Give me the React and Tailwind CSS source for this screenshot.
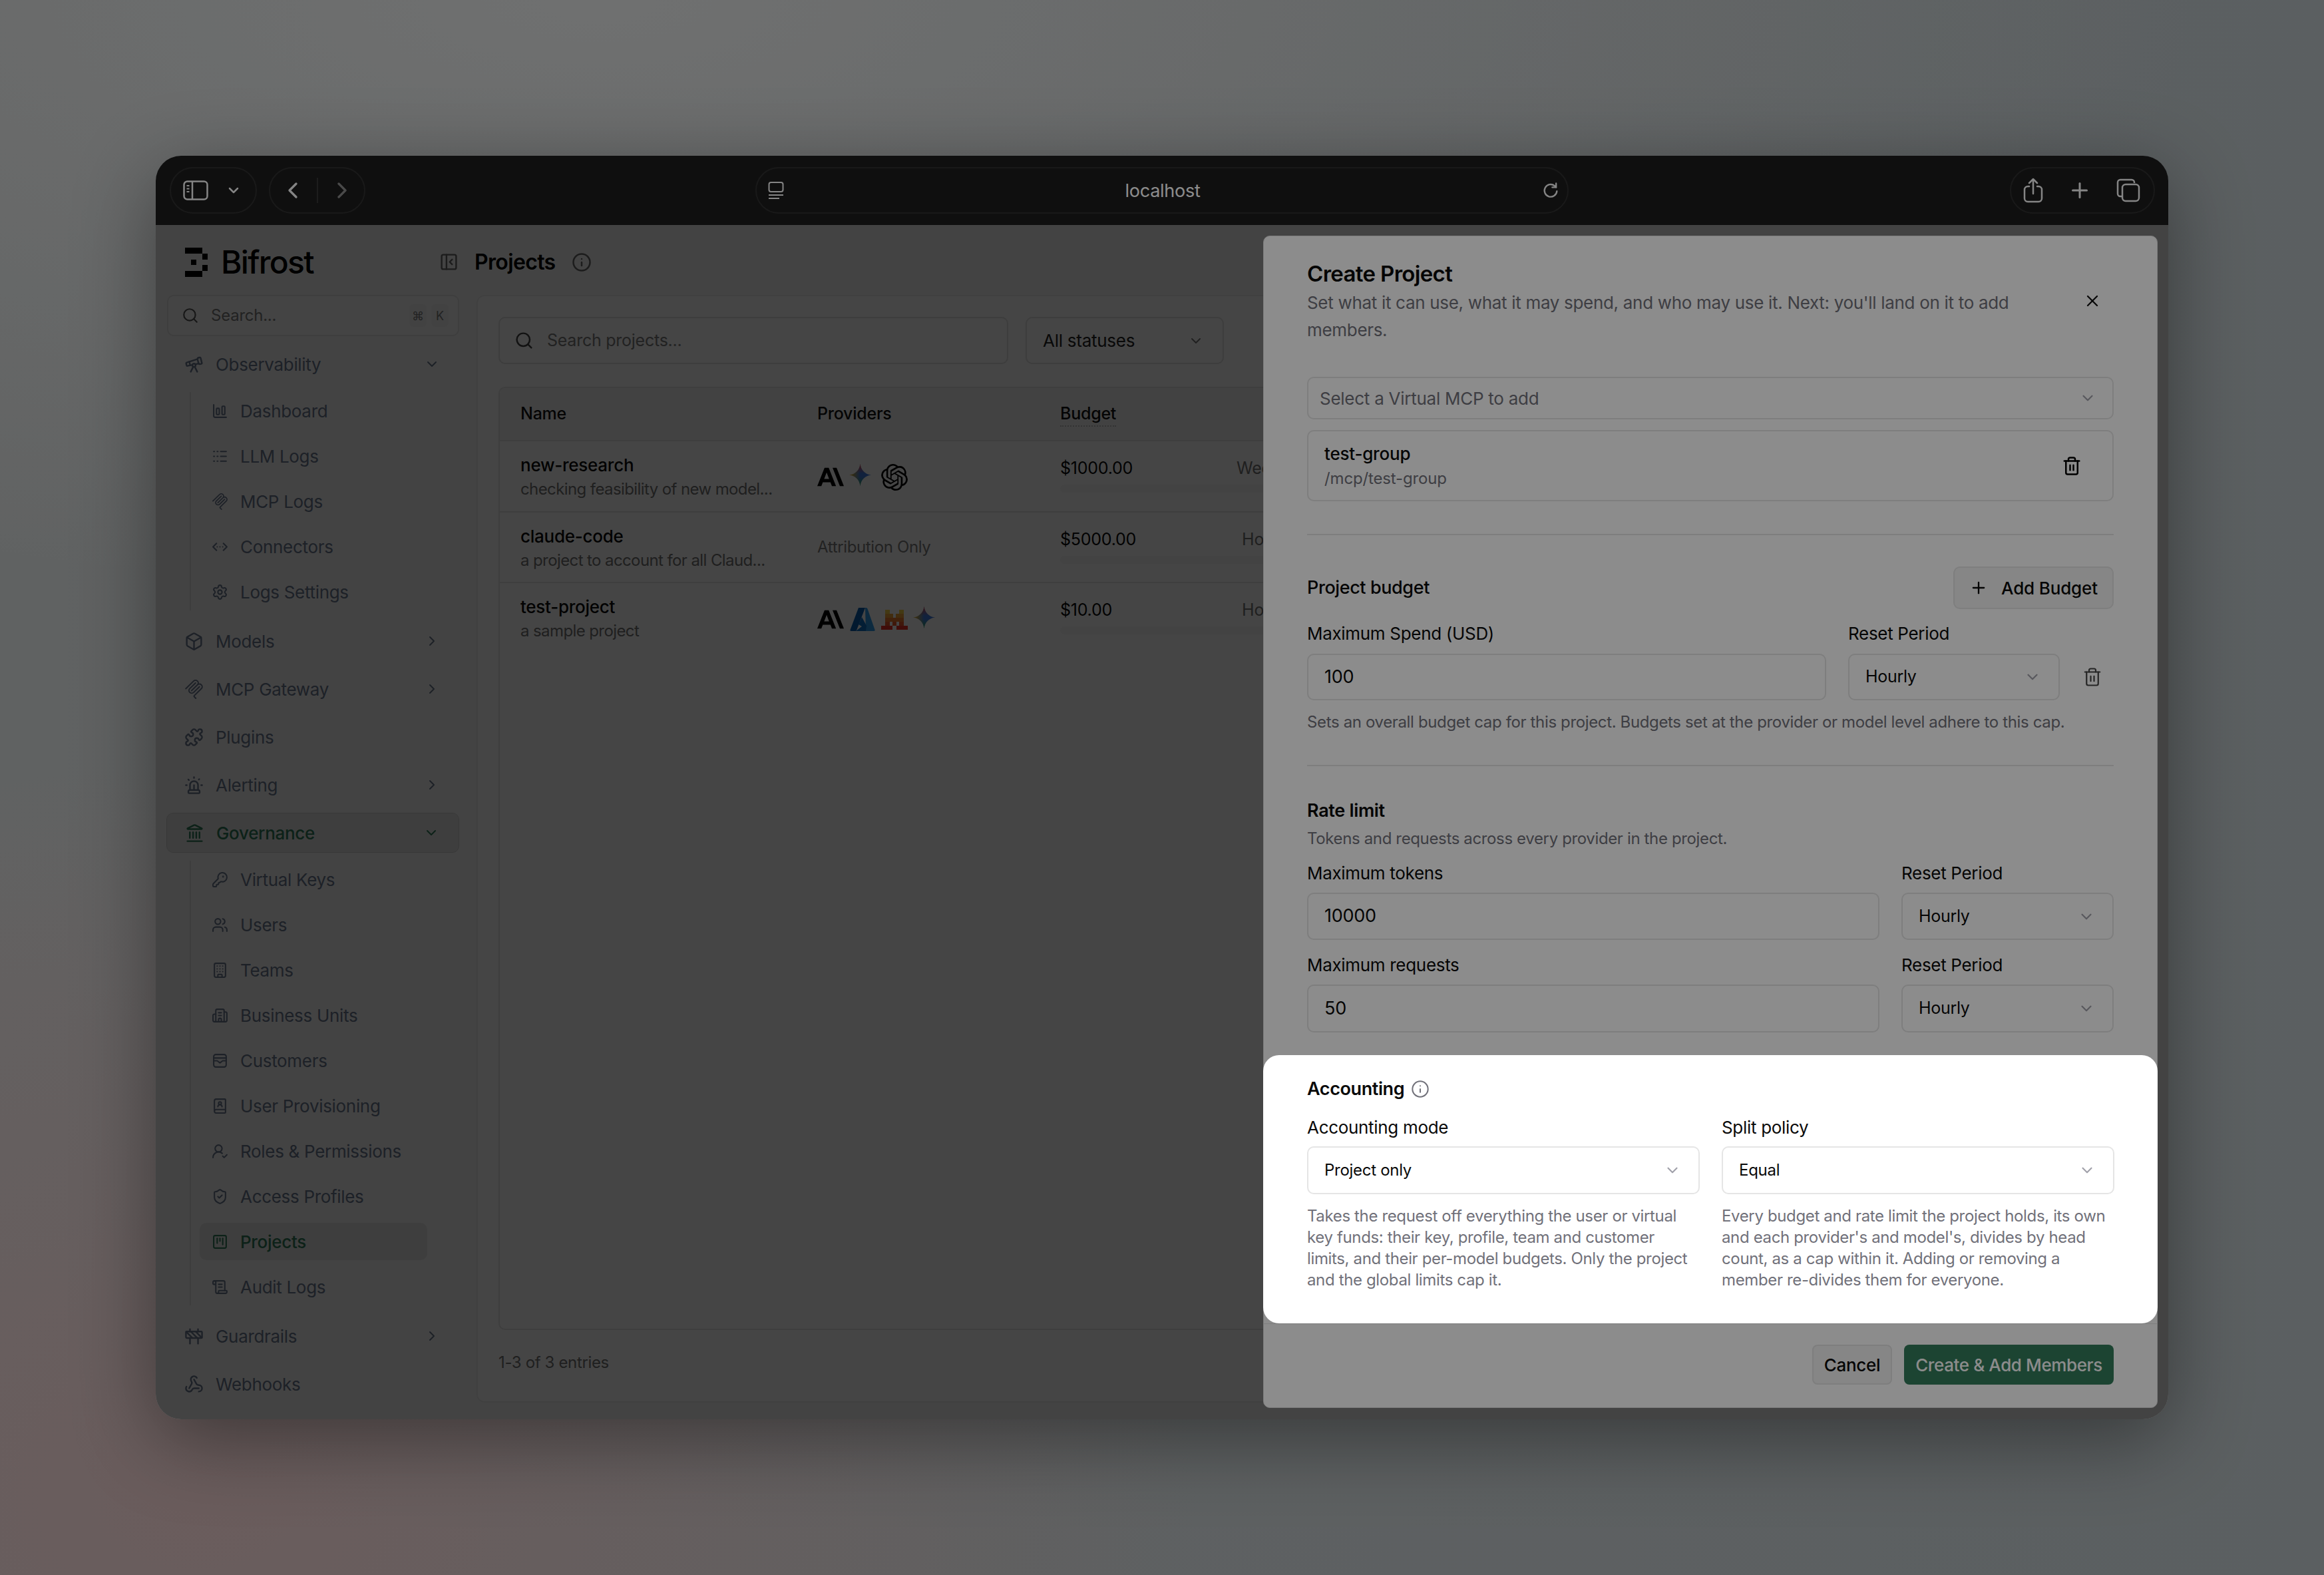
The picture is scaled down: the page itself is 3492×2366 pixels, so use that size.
import React from "react";
import {
  Telescope, ChartColumnBig, Logs, ChevronsLeftRightEllipsis, Settings, Box, Puzzle, Siren, Landmark,
  KeyRound, Users, Building, Building2, BookUser, UserRoundCheck, ShieldCheck, SquareKanban, ScrollText,
  Construction, Webhook, ChevronDown, ChevronRight, ChevronLeft, Search, Info, PanelLeftClose, X, Plus, Trash2,
} from "lucide-react";

const McpIcon = ({ className }) => (
  <svg viewBox="0 0 24 24" fill="currentColor" className={className}>
    <path d="M15.688 2.343a2.588 2.588 0 00-3.61 0l-9.626 9.44a.863.863 0 01-1.203 0 .823.823 0 010-1.18l9.626-9.44a4.313 4.313 0 016.016 0 4.116 4.116 0 011.204 3.54 4.3 4.3 0 013.609 1.18l.05.05a4.115 4.115 0 010 5.9l-8.706 8.537a.274.274 0 000 .393l1.788 1.754a.823.823 0 010 1.18.863.863 0 01-1.203 0l-1.788-1.753a1.92 1.92 0 010-2.754l8.706-8.538a2.47 2.47 0 000-3.54l-.05-.049a2.588 2.588 0 00-3.607-.003l-7.172 7.034-.002.002-.098.097a.863.863 0 01-1.204 0 .823.823 0 010-1.18l7.273-7.133a2.47 2.47 0 00-.003-3.537z" />
    <path d="M14.485 4.703a.823.823 0 000-1.18.863.863 0 00-1.204 0l-7.119 6.982a4.115 4.115 0 000 5.9 4.314 4.314 0 006.016 0l7.12-6.982a.823.823 0 000-1.18.863.863 0 00-1.204 0l-7.119 6.982a2.588 2.588 0 01-3.61 0 2.47 2.47 0 010-3.54l7.12-6.982z" />
  </svg>
);

const CustomersIcon = ({ className }) => (
  <svg viewBox="0 0 24 24" fill="none" stroke="currentColor" strokeWidth="2" strokeLinecap="round" strokeLinejoin="round" className={className}>
    <rect x="3" y="3" width="18" height="18" rx="3" />
    <path d="M3 8h18" />
    <path d="M3 12h5l4 3 4-3h5" />
  </svg>
);

const BifrostLogo = () => (
  <svg viewBox="0 0 34 44" className="w-[34px] h-[44px]" fill="#000">
    <rect x="0" y="0" width="26" height="9" />
    <rect x="26" y="9" width="8" height="9" />
    <rect x="9" y="18" width="8" height="8" />
    <rect x="26" y="26" width="8" height="9" />
    <rect x="0" y="35" width="26" height="9" />
  </svg>
);

const Anthropic = () => (
  <svg viewBox="0 0 24 24" className="w-[40px] h-[40px]" fill="#000">
    <path d="M13.827 3.52h3.603L24 20h-3.603l-6.57-16.48zm-7.258 0h3.767L16.906 20h-3.674l-1.343-3.461H5.017l-1.344 3.46H0L6.57 3.522zm4.132 9.959L8.453 7.687 6.205 13.48H10.7z" />
  </svg>
);

const Gemini = () => (
  <svg viewBox="0 0 29 29" className="w-[40px] h-[40px]">
    <defs>
      <linearGradient id="gemH" x1="0" y1="0" x2="1" y2="0">
        <stop offset="0" stopColor="#f5b400" />
        <stop offset="0.5" stopColor="#3f7be0" />
        <stop offset="1" stopColor="#3f7be0" />
      </linearGradient>
      <linearGradient id="gemV" x1="0" y1="0" x2="0" y2="1">
        <stop offset="0" stopColor="#e8453c" />
        <stop offset="0.42" stopColor="#e8453c" stopOpacity="0" />
        <stop offset="0.58" stopColor="#34a853" stopOpacity="0" />
        <stop offset="1" stopColor="#34a853" />
      </linearGradient>
    </defs>
    <path d="M12 0C12.6 6.5 17.5 11.4 24 12C17.5 12.6 12.6 17.5 12 24C11.4 17.5 6.5 12.6 0 12C6.5 11.4 11.4 6.5 12 0Z" fill="url(#gemH)" />
    <path d="M12 0C12.6 6.5 17.5 11.4 24 12C17.5 12.6 12.6 17.5 12 24C11.4 17.5 6.5 12.6 0 12C6.5 11.4 11.4 6.5 12 0Z" fill="url(#gemV)" />
  </svg>
);

const OpenAI = () => (
  <svg viewBox="0 0 24 24" className="w-[40px] h-[40px]" fill="#000">
    <path d="M22.2819 9.8211a5.9847 5.9847 0 0 0-.5157-4.9108 6.0462 6.0462 0 0 0-6.5098-2.9A6.0651 6.0651 0 0 0 4.9807 4.1818a5.9847 5.9847 0 0 0-3.9977 2.9 6.0462 6.0462 0 0 0 .7427 7.0966 5.98 5.98 0 0 0 .511 4.9107 6.051 6.051 0 0 0 6.5146 2.9001A5.9847 5.9847 0 0 0 13.2599 24a6.0557 6.0557 0 0 0 5.7718-4.2058 5.9894 5.9894 0 0 0 3.9977-2.9001 6.0557 6.0557 0 0 0-.7475-7.0729zm-9.022 12.6081a4.4755 4.4755 0 0 1-2.8764-1.0408l.1419-.0804 4.7783-2.7582a.7948.7948 0 0 0 .3927-.6813v-6.7369l2.02 1.1686a.071.071 0 0 1 .038.052v5.5826a4.504 4.504 0 0 1-4.4945 4.4944zm-9.6607-4.1254a4.4708 4.4708 0 0 1-.5346-3.0137l.142.0852 4.783 2.7582a.7712.7712 0 0 0 .7806 0l5.8428-3.3685v2.3324a.0804.0804 0 0 1-.0332.0615L9.74 19.9502a4.4992 4.4992 0 0 1-6.1408-1.6464zM2.3408 7.8956a4.485 4.485 0 0 1 2.3655-1.9728V11.6a.7664.7664 0 0 0 .3879.6765l5.8144 3.3543-2.0201 1.1685a.0757.0757 0 0 1-.071 0l-4.8303-2.7865A4.504 4.504 0 0 1 2.3408 7.872zm16.5963 3.8558L13.1038 8.364 15.1192 7.2a.0757.0757 0 0 1 .071 0l4.8303 2.7913a4.4944 4.4944 0 0 1-.6765 8.1042v-5.6772a.79.79 0 0 0-.407-.667zm2.0107-3.0231l-.142-.0852-4.7735-2.7818a.7759.7759 0 0 0-.7854 0L9.409 9.2297V6.8974a.0662.0662 0 0 1 .0284-.0615l4.8303-2.7866a4.4992 4.4992 0 0 1 6.6802 4.66zM8.3065 12.863l-2.02-1.1638a.0804.0804 0 0 1-.038-.0567V6.0742a4.4992 4.4992 0 0 1 7.3757-3.4537l-.142.0805L8.704 5.459a.7948.7948 0 0 0-.3927.6813zm1.0976-2.3654l2.602-1.4998 2.6069 1.4998v2.9994l-2.5974 1.4997-2.6067-1.4997Z" />
  </svg>
);

const Azure = () => (
  <svg viewBox="0 0 40 40" className="w-[40px] h-[40px]">
    <path d="M14 2h10L11 36a2 2 0 0 1-2 1H3a1.5 1.5 0 0 1-1.4-2z" fill="#0a5cad" />
    <path d="M24 2h1.5a2 2 0 0 1 2 1.5L38.5 35a1.5 1.5 0 0 1-1.4 2H25z" fill="#2f9be8" />
    <path d="M19 16l7 13-1 8H10l9-7-5-3z" fill="#0c6fc4" />
  </svg>
);

const Mistral = () => (
  <svg viewBox="0 0 40 40" className="w-[40px] h-[40px]">
    <rect x="6" y="5" width="7" height="6" fill="#f7d046" />
    <rect x="27" y="5" width="7" height="6" fill="#f7d046" />
    <rect x="6" y="11" width="12" height="6" fill="#f2a73b" />
    <rect x="22" y="11" width="12" height="6" fill="#f2a73b" />
    <rect x="6" y="17" width="28" height="6" fill="#ee792f" />
    <rect x="6" y="23" width="7" height="6" fill="#eb5829" />
    <rect x="17" y="23" width="6" height="6" fill="#eb5829" />
    <rect x="27" y="23" width="7" height="6" fill="#eb5829" />
    <rect x="0" y="29" width="17" height="6" fill="#ea3326" />
    <rect x="23" y="29" width="17" height="6" fill="#ea3326" />
  </svg>
);

const Provider = ({ children }) => (
  <div className="w-[40px] h-[40px] rounded-[8px] bg-[#fcfcfc]">{children}</div>
);

const nested1 = [
  { label: "Dashboard", Icon: ChartColumnBig },
  { label: "LLM Logs", Icon: Logs },
  { label: "MCP Logs", Icon: McpIcon },
  { label: "Connectors", Icon: ChevronsLeftRightEllipsis },
  { label: "Logs Settings", Icon: Settings },
];

const nested2 = [
  { label: "Virtual Keys", Icon: KeyRound },
  { label: "Users", Icon: Users },
  { label: "Teams", Icon: Building },
  { label: "Business Units", Icon: Building2 },
  { label: "Customers", Icon: CustomersIcon },
  { label: "User Provisioning", Icon: BookUser },
  { label: "Roles & Permissions", Icon: UserRoundCheck },
  { label: "Access Profiles", Icon: ShieldCheck },
  { label: "Projects", Icon: SquareKanban, active: true },
  { label: "Audit Logs", Icon: ScrollText },
];

const NavRow = ({ label, Icon, chevron, active }) => (
  <div
    className={`h-[60px] flex items-center pl-[27px] pr-[29px] rounded-[10px] text-[26px] tracking-[-0.012em] ${
      active ? "bg-[#e4e4e4] border border-[#cfcfcf] text-[#2f7a58] font-medium" : "text-[#6b7890]"
    }`}
  >
    <Icon className="w-[29px] h-[29px] shrink-0" strokeWidth={2} />
    <span className="ml-[18px] flex-1">{label}</span>
    {chevron === "down" && <ChevronDown className="w-[24px] h-[24px]" strokeWidth={2} />}
    {chevron === "right" && <ChevronRight className="w-[24px] h-[24px]" strokeWidth={2} />}
  </div>
);

const NestedList = ({ items }) => (
  <div className="ml-[35px] pl-[14px] border-l-2 border-[#dedede] flex flex-col gap-[12px] mb-[4px]">
    {items.map(({ label, Icon, active }) => (
      <div
        key={label}
        className={`w-[342px] h-[56px] flex items-center px-[18px] -ml-px rounded-[10px] text-[26px] tracking-[-0.012em] ${
          active ? "bg-[#e4e4e4] text-[#2f7a58] font-medium" : "text-[#6b7890]"
        }`}
      >
        <Icon className="w-[25px] h-[25px] shrink-0" strokeWidth={2} />
        <span className="ml-[18px]">{label}</span>
      </div>
    ))}
  </div>
);

const Sidebar = () => (
  <div className="w-[482px] shrink-0 pl-[16px] pr-[26px] flex flex-col">
    <div className="h-[105px] flex items-center pl-[28px] gap-[20px] pt-[6px]">
      <BifrostLogo />
      <span className="text-[48px] font-medium tracking-[-0.035em] text-black leading-none">Bifrost</span>
    </div>
    <div className="h-[62px] ml-[1px] rounded-[10px] border-2 border-[#e2e2e2] bg-[#fbfbfb] flex items-center pl-[20px] pr-[14px] text-[24px] text-[#7d7d7d]">
      <Search className="w-[26px] h-[26px] text-[#555]" strokeWidth={2} />
      <span className="ml-[18px] flex-1 tracking-[-0.01em]">Search...</span>
      <span className="w-[26px] h-[34px] rounded-[6px] bg-[#f1f1f1] flex items-center justify-center text-[18px] mr-[7px]">⌘</span>
      <span className="w-[26px] h-[34px] rounded-[6px] bg-[#f1f1f1] flex items-center justify-center text-[18px]">K</span>
    </div>
    <div className="mt-[12px] flex flex-col gap-[12px]">
      <NavRow label="Observability" Icon={Telescope} chevron="down" />
      <NestedList items={nested1} />
      <NavRow label="Models" Icon={Box} chevron="right" />
      <NavRow label="MCP Gateway" Icon={McpIcon} chevron="right" />
      <NavRow label="Plugins" Icon={Puzzle} />
      <NavRow label="Alerting" Icon={Siren} chevron="right" />
      <NavRow label="Governance" Icon={Landmark} chevron="down" active />
      <NestedList items={nested2} />
      <NavRow label="Guardrails" Icon={Construction} chevron="right" />
      <NavRow label="Webhooks" Icon={Webhook} />
    </div>
  </div>
);

const rows = [
  { name: "new-research", desc: "checking feasibility of new model...", providers: [Anthropic, Gemini, OpenAI], budget: "$1000.00", period: "Weekly" },
  { name: "claude-code", desc: "a project to account for all Claud...", budget: "$5000.00", period: "Hourly" },
  { name: "test-project", desc: "a sample project", providers: [Anthropic, Azure, Mistral, Gemini], budget: "$10.00", period: "Hourly", last: true },
];

const MainPanel = () => (
  <div className="flex-1 flex flex-col pr-[16px]">
    <div className="h-[105px] flex items-center -ml-[56px] pt-[6px]">
      <PanelLeftClose className="w-[29px] h-[29px] text-[#666]" strokeWidth={2} />
      <span className="ml-[24px] text-[32px] font-semibold tracking-[-0.02em] text-black">Projects</span>
      <Info className="ml-[24px] w-[30px] h-[30px] text-[#666]" strokeWidth={2} />
    </div>
    <div className="flex-1 mb-[25px] rounded-[12px] border-2 border-[#ededed] bg-[#fdfdfd] px-[31px] pt-[31px] flex flex-col">
      <div className="flex gap-[26px]">
        <div className="w-[766px] h-[71px] rounded-[10px] border-2 border-[#dedede] flex items-center pl-[22px] text-[25px] text-[#7d7d7d] tracking-[-0.01em]">
          <Search className="w-[29px] h-[29px] text-[#444]" strokeWidth={2} />
          <span className="ml-[20px]">Search projects...</span>
        </div>
        <div className="w-[298px] h-[71px] rounded-[10px] border-2 border-[#dedede] flex items-center pl-[24px] pr-[28px] justify-between text-[26px] text-[#222] tracking-[-0.01em]">
          <span>All statuses</span>
          <ChevronDown className="w-[24px] h-[24px] text-[#777]" strokeWidth={2} />
        </div>
      </div>
      <div className="mt-[34px] flex-1 rounded-[10px] border-2 border-[#e5e5e5] overflow-hidden">
        <div className="h-[80px] bg-[#f3f3f3] border-b-2 border-[#e5e5e5] flex items-center pl-[31px] text-[25px] font-medium text-[#111] tracking-[-0.01em]">
          <span className="w-[446px]">Name</span>
          <span className="w-[365px]">Providers</span>
          <span className="border-b-2 border-dotted border-[#bbb] leading-[36px]">Budget</span>
        </div>
        {rows.map((r) => (
          <div key={r.name} className={`h-[106.5px] flex pl-[31px] ${r.last ? "" : "border-b-2 border-[#e5e5e5]"}`}>
            <div className="w-[446px] pt-[19px]">
              <div className="text-[26px] leading-[34px] font-medium text-[#0a0a0a] tracking-[-0.01em]">{r.name}</div>
              <div className="text-[24px] leading-[34px] mt-[2px] text-[#757575] tracking-[-0.025em]">{r.desc}</div>
            </div>
            <div className="w-[365px] flex items-center">
              {r.providers ? (
                <div className="flex gap-[8px] mt-[4px]">
                  {r.providers.map((P, i) => (
                    <Provider key={i}>
                      <P />
                    </Provider>
                  ))}
                </div>
              ) : (
                <span className="text-[24px] text-[#7d7d7d] tracking-[-0.015em]">Attribution Only</span>
              )}
            </div>
            <div className="w-[360px] pt-[23px]">
              <div className="flex justify-between text-[25px] leading-[34px] tracking-[-0.01em]">
                <span className="text-[#0a0a0a]">{r.budget}</span>
                <span className="text-[#757575] mr-[10px]">{r.period}</span>
              </div>
              <div className="mt-[8px] h-[12px] rounded-full bg-[#f7f7f7]"></div>
            </div>
          </div>
        ))}
      </div>
      <div className="h-[107px] pt-[33px] text-[24px] leading-[32px] text-[#757575] tracking-[-0.015em]">1-3 of 3 entries</div>
    </div>
  </div>
);

const Label = ({ children }) => (
  <div className="text-[26px] leading-[32px] text-[#0a0a0a] tracking-[-0.012em]">{children}</div>
);

const Field = ({ value, className }) => (
  <div className={`rounded-[10px] border-2 border-[#e5e5e5] flex items-center pl-[24px] text-[27px] text-[#0a0a0a] tracking-[-0.01em] ${className}`}>
    {value}
  </div>
);

const SelectBox = ({ value, className, text = "text-[25px]" }) => (
  <div className={`rounded-[10px] border-2 border-[#e5e5e5] flex items-center justify-between pl-[24px] pr-[26px] ${text} text-[#0a0a0a] tracking-[-0.012em] ${className}`}>
    <span>{value}</span>
    <ChevronDown className="w-[26px] h-[26px] text-[#a1a1aa]" strokeWidth={2} />
  </div>
);

const CreateProjectDialog = () => (
  <div className="absolute z-50 top-[16px] right-[16px] bottom-[17px] w-[1344px] bg-white rounded-[10px] border border-[#e5e5e5] flex flex-col">
    <div className="px-[65px] pt-[36px]">
      <div className="flex items-center">
        <div className="w-[1120px] flex-1">
          <div className="text-[33px] leading-[40px] font-semibold text-[#0a0a0a] tracking-[-0.02em]">Create Project</div>
          <div className="mt-[3px] w-[1100px] text-[26px] leading-[41px] text-[#71717a] tracking-[-0.012em]">
            Set what it can use, what it may spend, and who may use it. Next: you'll land on it to add members.
          </div>
        </div>
        <X className="w-[28px] h-[28px] mr-[18px] mb-[3px] text-[#111]" strokeWidth={2} />
      </div>

      <div className="mt-[50px] h-[64px] rounded-[10px] border-2 border-[#e5e5e5] flex items-center justify-between pl-[17px] pr-[24px] text-[26px] text-[#71717a] tracking-[-0.01em]">
        <span>Select a Virtual MCP to add</span>
        <ChevronDown className="w-[26px] h-[26px] text-[#a1a1aa]" strokeWidth={2} />
      </div>
      <div className="mt-[16px] h-[107px] rounded-[10px] border-2 border-[#e5e5e5] flex items-center justify-between pl-[24px] pr-[46px]">
        <div>
          <div className="text-[26px] leading-[36px] font-medium text-[#0a0a0a] tracking-[-0.008em]">test-group</div>
          <div className="text-[24px] leading-[32px] mt-[3px] text-[#71717a] tracking-[-0.006em]">/mcp/test-group</div>
        </div>
        <Trash2 className="w-[30px] h-[30px] text-black" strokeWidth={2} />
      </div>

      <div className="mt-[49px] h-[2px] bg-[#e5e5e5]"></div>

      <div className="mt-[47px] flex items-center justify-between">
        <span className="text-[27px] font-medium text-[#0a0a0a] tracking-[-0.015em]">Project budget</span>
        <div className="w-[241px] h-[64px] rounded-[10px] border-2 border-[#e5e5e5] bg-[#f5f5f5] flex items-center justify-center gap-[20px] text-[26px] font-medium text-[#0a0a0a] tracking-[-0.006em]">
          <Plus className="w-[28px] h-[28px]" strokeWidth={2} />
          <span>Add Budget</span>
        </div>
      </div>
      <div className="mt-[21px] flex">
        <div className="w-[780px]">
          <Label>Maximum Spend (USD)</Label>
          <Field value="100" className="mt-[14px] h-[70px]" />
        </div>
        <div className="ml-[33px] w-[318px]">
          <Label>Reset Period</Label>
          <SelectBox value="Hourly" className="mt-[14px] h-[70px]" />
        </div>
        <div className="ml-[34px] self-end h-[70px] flex items-center">
          <Trash2 className="w-[30px] h-[30px] text-[#444]" strokeWidth={1.75} />
        </div>
      </div>
      <div className="mt-[17px] text-[24px] leading-[32px] text-[#71717a] tracking-[-0.015em]">
        Sets an overall budget cap for this project. Budgets set at the provider or model level adhere to this cap.
      </div>

      <div className="mt-[48px] h-[2px] bg-[#e5e5e5]"></div>

      <div className="mt-[49px] text-[27px] leading-[36px] font-semibold text-[#0a0a0a] tracking-[-0.012em]">Rate limit</div>
      <div className="mt-[8px] text-[24px] leading-[32px] text-[#71717a] tracking-[-0.015em]">
        Tokens and requests across every provider in the project.
      </div>
      <div className="mt-[20px] flex gap-[33px]">
        <div className="w-[860px]">
          <Label>Maximum tokens</Label>
          <Field value="10000" className="mt-[13px] h-[71px]" />
        </div>
        <div className="flex-1">
          <Label>Reset Period</Label>
          <SelectBox value="Hourly" className="mt-[13px] h-[71px]" />
        </div>
      </div>
      <div className="mt-[22px] flex gap-[33px]">
        <div className="w-[860px]">
          <Label>Maximum requests</Label>
          <Field value="50" className="mt-[13px] h-[72px]" />
        </div>
        <div className="flex-1">
          <Label>Reset Period</Label>
          <SelectBox value="Hourly" className="mt-[13px] h-[72px]" />
        </div>
      </div>
    </div>

    {/* highlighted section, the shadow dims the rest of the page */}
    <div className="relative z-10 mt-[34px] -mx-px bg-white rounded-[24px] shadow-[0_0_0_5000px_rgba(0,0,0,0.45)] pl-[66px] pr-[65px] pt-[33px] pb-[49px]">
      <div className="flex items-center gap-[10px]">
        <span className="text-[27px] leading-[36px] font-semibold text-[#0a0a0a] tracking-[-0.015em]">Accounting</span>
        <Info className="w-[28px] h-[28px] text-[#71717a]" strokeWidth={1.75} />
      </div>
      <div className="mt-[24px] grid grid-cols-2 gap-x-[33px]">
        <div>
          <Label>Accounting mode</Label>
          <SelectBox value="Project only" text="text-[24px]" className="mt-[12px] h-[72px]" />
          <p className="mt-[17px] text-[24px] leading-[32px] text-[#71717a] tracking-[-0.015em]">
            Takes the request off everything the user or virtual key funds: their key, profile, team and customer limits, and their per-model budgets. Only the project and the global limits cap it.
          </p>
        </div>
        <div>
          <Label>Split policy</Label>
          <SelectBox value="Equal" text="text-[24px]" className="mt-[12px] h-[72px]" />
          <p className="mt-[17px] text-[24px] leading-[32px] text-[#71717a] tracking-[-0.015em]">
            Every budget and rate limit the project holds, its own and each provider's and model's, divides by head count, as a cap within it. Adding or removing a member re-divides them for everyone.
          </p>
        </div>
      </div>
    </div>

    <div className="flex-1 border-t border-[#e5e5e5] flex justify-end gap-[18px] pt-[31px] pr-[65px]">
      <div className="w-[120px] h-[60px] rounded-[8px] border-2 border-[#e5e5e5] bg-[#f5f5f5] flex items-center justify-center text-[26px] font-medium text-[#0a0a0a] tracking-[-0.012em]">
        Cancel
      </div>
      <div className="w-[315px] h-[60px] rounded-[8px] bg-[#337d5b] flex items-center justify-center text-[26px] font-medium text-white tracking-[-0.015em]">
        Create &amp; Add Members
      </div>
    </div>
  </div>
);

const TitleBar = () => (
  <div className="h-[104px] bg-[#1c1c1c] rounded-t-[38px] flex items-center text-[#f2f2f2]">
    <div className="ml-[21px] w-[131px] h-[70px] rounded-full border-2 border-[#2f2f2f] flex items-center pl-[18px] gap-[26px]">
      <svg viewBox="0 0 38 30" className="w-[38px] h-[30px]" fill="none" stroke="currentColor" strokeWidth="2.5">
        <rect x="1.5" y="1.5" width="35" height="27" rx="5" />
        <path d="M14 2v26" />
        <path d="M5.5 8h4M5.5 12.5h4M5.5 17h4" strokeWidth="2" />
      </svg>
      <ChevronDown className="w-[24px] h-[24px]" strokeWidth={2.5} />
    </div>
    <div className="ml-[18px] w-[145px] h-[70px] rounded-full border-2 border-[#2f2f2f] flex items-center justify-center">
      <ChevronLeft className="w-[40px] h-[40px]" strokeWidth={2} />
      <div className="w-[2px] h-[38px] bg-[#333] mx-[16px]"></div>
      <ChevronRight className="w-[40px] h-[40px] opacity-50" strokeWidth={2} />
    </div>
    <div className="ml-[586px] w-[1222px] h-[70px] rounded-full border-2 border-[#2f2f2f] flex items-center justify-between pl-[17px] pr-[11px]">
      <svg viewBox="0 0 24 26" className="w-[24px] h-[26px]" fill="none" stroke="currentColor" strokeWidth="2">
        <rect x="1.5" y="1" width="21" height="14" rx="3" />
        <path d="M1 20h22M1 25h16" />
      </svg>
      <span className="text-[27px] text-white tracking-[-0.01em] pt-[2px]">localhost</span>
      <svg viewBox="0 0 24 24" className="w-[28px] h-[28px]" fill="none" stroke="currentColor" strokeWidth="2" strokeLinecap="round" strokeLinejoin="round">
        <path d="M20 13a8 8 0 1 1-3-7l2 2" />
        <path d="M19 3v5h-5" />
      </svg>
    </div>
    <div className="ml-auto mr-[20px] w-[218px] h-[70px] rounded-full border-2 border-[#2f2f2f] flex items-center justify-between pl-[18px] pr-[20px]">
      <svg viewBox="0 0 30 38" className="w-[30px] h-[38px]" fill="none" stroke="currentColor" strokeWidth="2.5" strokeLinecap="round" strokeLinejoin="round">
        <path d="M9 13H7a5 5 0 0 0-5 5v13a5 5 0 0 0 5 5h16a5 5 0 0 0 5-5V18a5 5 0 0 0-5-5h-2" />
        <path d="M15 24V2M9 8l6-6 6 6" />
      </svg>
      <Plus className="w-[36px] h-[36px]" strokeWidth={2} />
      <svg viewBox="0 0 36 36" className="w-[36px] h-[36px]" fill="none" stroke="currentColor" strokeWidth="2.5">
        <path d="M27 7V6a4 4 0 0 0-4-4H6a4 4 0 0 0-4 4v17a4 4 0 0 0 4 4h2" />
        <rect x="9" y="9" width="25" height="25" rx="5" />
      </svg>
    </div>
  </div>
);

export default function App() {
  return (
    <div
      className="w-[3492px] h-[2366px] overflow-hidden pt-[234px] pl-[234px] bg-[#a8aeb0] bg-[radial-gradient(ellipse_1500px_1100px_at_300px_2250px,#c2a8a8_0%,rgba(194,168,168,0)_100%),radial-gradient(ellipse_2400px_900px_at_900px_0px,#cbcdcd_0%,rgba(203,205,205,0)_100%),linear-gradient(90deg,#b0b3b3,#a6aeb1)]"
      style={{ fontFamily: "Inter, 'Liberation Sans', sans-serif" }}
    >
      <div className="w-[3024px] h-[1898px] flex flex-col rounded-[38px] shadow-[0_30px_120px_rgba(0,0,0,0.4)]">
        <TitleBar />
        <div className="relative flex-1 flex bg-[#f7f7f7] rounded-b-[38px]">
          <Sidebar />
          <MainPanel />
          <div className="absolute inset-0 z-40 bg-black/50 rounded-b-[38px]"></div>
          <CreateProjectDialog />
        </div>
      </div>
    </div>
  );
}
